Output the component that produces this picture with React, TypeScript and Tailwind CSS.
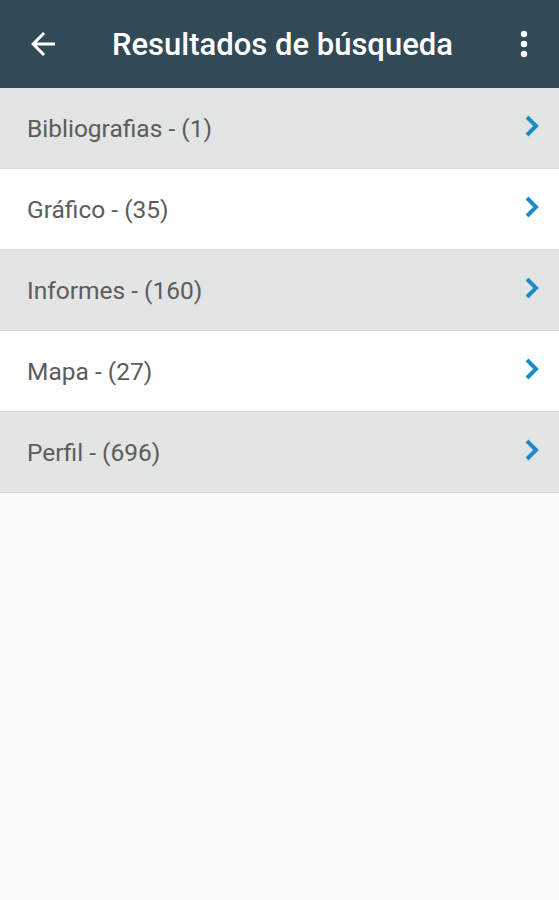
const items = [
  { label: 'Bibliografias', count: 1 },
  { label: 'Gráfico', count: 35 },
  { label: 'Informes', count: 160 },
  { label: 'Mapa', count: 27 },
  { label: 'Perfil', count: 696 },
];

const Chevron = () => (
  <svg width="18" height="24" viewBox="0 0 18 24" className="text-[#1b8bcb]">
    <polyline points="4,3 13,12 4,21" fill="none" stroke="currentColor" strokeWidth="4" strokeLinejoin="miter" />
  </svg>
);

export default function App() {
  return (
    <div className="min-h-[900px] bg-[#fafafa] font-['Roboto',sans-serif]">
      <header className="flex h-[88px] items-center bg-[#324a56] text-white">
        <button className="ml-[25px] flex h-[36px] w-[36px] items-center justify-center">
          <svg width="36" height="36" viewBox="0 0 24 24">
            <path d="M20 11H7.83l5.59-5.59L12 4l-8 8 8 8 1.41-1.41L7.83 13H20v-2z" fill="currentColor" />
          </svg>
        </button>
        <h1 className="ml-[51px] mt-[3px] flex-1 text-[31px] font-medium">Resultados de búsqueda</h1>
        <button className="mr-[28px] flex h-[30px] w-[14px] items-center justify-center">
          <svg width="8" height="28" viewBox="0 0 8 28">
            <circle cx="4" cy="4" r="3.2" fill="currentColor" />
            <circle cx="4" cy="14" r="3.2" fill="currentColor" />
            <circle cx="4" cy="24" r="3.2" fill="currentColor" />
          </svg>
        </button>
      </header>
      <ul>
        {items.map((item, i) => (
          <li
            key={item.label}
            className={`flex h-[81px] items-center justify-between border-b border-[#d9d9d9] pl-[27px] pr-[18px] ${
              i % 2 === 0 ? 'bg-[#e3e4e4]' : 'bg-white'
            }`}
          >
            <span className="mt-[3px] text-[24.5px] text-[#5c5c5c]">
              {item.label} - ({item.count})
            </span>
            <span className="mb-[5px]">
              <Chevron />
            </span>
          </li>
        ))}
      </ul>
    </div>
  );
}
